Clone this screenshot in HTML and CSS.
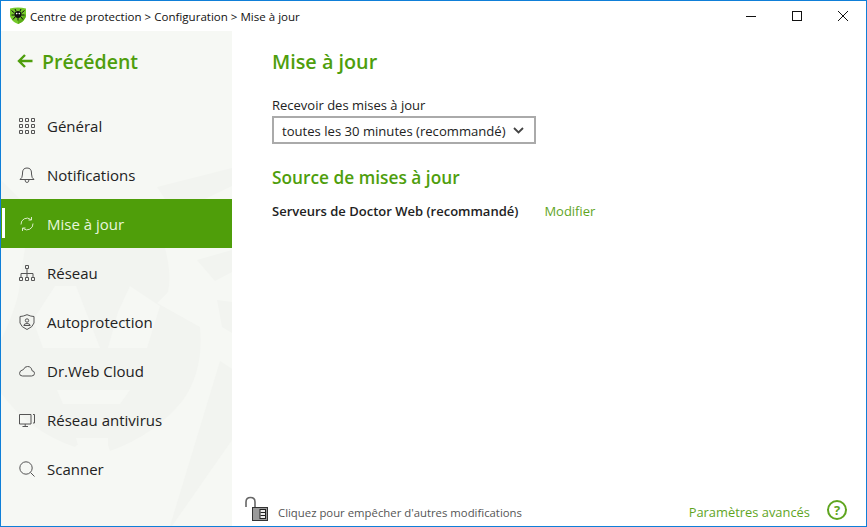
FILE: index.html
```
<!DOCTYPE html>
<html lang="fr">
<head>
<meta charset="utf-8">
<title>Mise à jour</title>
<link rel="stylesheet" href="styles.css">
</head>
<body>
<div class="window">
  <header class="titlebar">
    <svg class="logo" width="18" height="18" viewBox="0 0 18 18">
      <path d="M1 1.5 Q9 -.5 17 1.5 L17 9 Q16 14 9 17 Q2 14 1 9Z" fill="#74c92a"/>
      <path d="M9 17 Q16 14 17 9 L17 7 L9 14Z" fill="#5cae18"/>
      <ellipse cx="9" cy="7.5" rx="3.6" ry="3.4" fill="#111"/>
      <circle cx="7.7" cy="6.6" r=".8" fill="#fff"/><circle cx="10.3" cy="6.6" r=".8" fill="#fff"/>
      <path d="M5.5 6 L2.5 3.5M5.5 8 L2.5 8M6 10 L4 12.5M12.5 6 L15.5 3.5M12.5 8 L15.5 8M12 10 L14 12.5M7 4 L6 2M11 4 L12 2M9 10.5 V13.5" stroke="#111" stroke-width="1" fill="none"/>
    </svg>
    <span class="crumbs">Centre de protection &gt; Configuration &gt; Mise à jour</span>
    <div class="controls">
      <svg class="ctl" width="46" height="30" viewBox="0 0 46 30"><path d="M18 15.5H28" stroke="#111" fill="none"/></svg>
      <svg class="ctl" width="46" height="30" viewBox="0 0 46 30"><rect x="18.5" y="10.5" width="9" height="9" stroke="#111" fill="none"/></svg>
      <svg class="ctl" width="46" height="30" viewBox="0 0 46 30"><path d="M18 10L28 20M28 10L18 20" stroke="#111" fill="none"/></svg>
    </div>
  </header>
  <div class="body">
    <aside class="sidebar">
      <svg class="watermark" width="231" height="495" viewBox="1 31 231 495">
        <g fill="#f2f4f0">
          <path d="M157 187 L232 168 L232 186 L205 199 L165 199Z"/>
          <path d="M1 180 L20 199 H1Z"/>
          <path d="M25 248 H165 Q172 275 168 292 L157 303 L200 327 Q204 370 183 400 Q155 435 110 451 L108 445 H77 L75 447 Q30 432 1 393 V340 Q20 300 20 280Z"/>
          <path d="M197 260 L232 250 V272 L215 281Z"/>
          <path d="M217 300 L232 302 V333 L222 327Z"/>
          <path d="M220 361 L232 369 V440 L172 526 H170Z"/>
        </g>
        <g fill="#f6f8f4">
          <path d="M55 286 L76 286 L100 348 L43 348 L33 320Z"/>
          <path d="M108 348 L147 348 L160 306 L130 286 L118 312Z"/>
          <path d="M57 390 H130 L120 404 H63Z"/>
          <path d="M76 438 H108 V445 H78Z"/>
        </g>
      </svg>
      <a class="back"><svg width="16" height="16" viewBox="0 0 16 16"><path d="M8 2 L2 8 L8 14M2 8H15.5" stroke="#4e9e0c" stroke-width="2.4" fill="none"/></svg><span>Précédent</span></a>
      <nav class="menu">
        <a class="item"><svg width="16" height="16" viewBox="0 0 16 16" fill="none" stroke="#555"><path d="M.5 .5h3v3h-3zM6.5 .5h3v3h-3zM12.5 .5h3v3h-3zM.5 6.5h3v3h-3zM6.5 6.5h3v3h-3zM12.5 6.5h3v3h-3zM.5 12.5h3v3h-3zM6.5 12.5h3v3h-3zM12.5 12.5h3v3h-3z"/></svg><span>Général</span></a>
        <a class="item"><svg width="16" height="16" viewBox="0 0 16 16" fill="none" stroke="#555"><path d="M1 12.5 Q3.5 11 3.5 7 V6 Q3.5 1 8 1 Q12.5 1 12.5 6 V7 Q12.5 11 15 12.5Z M6 12.5 Q6 15.5 8 15.5 Q10 15.5 10 12.5"/></svg><span>Notifications</span></a>
        <a class="item active"><svg width="16" height="16" viewBox="0 0 16 16" fill="none" stroke="#d8ecc8"><path d="M2 8.5 A6 6 0 0 1 11.8 3.5 M14 7.5 A6 6 0 0 1 4.2 12.5 M12.5 1 V4 H9.5 M3.5 15 V12 H6.5"/></svg><span>Mise à jour</span></a>
        <a class="item"><svg width="16" height="16" viewBox="0 0 16 16" fill="none" stroke="#555"><path d="M6.5 .5h3v3h-3zM.5 12.5h3v3h-3zM6.5 12.5h3v3h-3zM12.5 12.5h3v3h-3zM8 3.5V12.5M2 12.5V8.5H14V12.5"/></svg><span>Réseau</span></a>
        <a class="item"><svg width="16" height="16" viewBox="0 0 16 16" fill="none" stroke="#555"><path d="M8 .7 Q12 2.5 15 2.5 V9 Q14 13 8 15.5 Q2 13 1 9 V2.5 Q4 2.5 8 .7Z"/><circle cx="8" cy="6.5" r="1.7"/><path d="M4.8 11.5 Q5 9.5 8 9.5 Q11 9.5 11.2 11.5Z"/></svg><span>Autoprotection</span></a>
        <a class="item"><svg width="16" height="16" viewBox="0 0 16 16" fill="none" stroke="#555"><path d="M3.5 13 H12.5 Q15.5 13 15.5 10.3 Q15.5 8 13 7.7 Q12.5 3.5 8.5 3.5 Q5.5 3.5 4.5 6.5 Q.5 7.5 .5 10.3 Q.5 13 3.5 13Z"/></svg><span>Dr.Web Cloud</span></a>
        <a class="item"><svg width="16" height="16" viewBox="0 0 16 16" fill="none" stroke="#555"><path d="M.5 2.5h11.5v9.5H.5zM6.2 12v2.5M3.5 14.5H9M14 2.5h1.5v8.5H14"/></svg><span>Réseau antivirus</span></a>
        <a class="item"><svg width="16" height="16" viewBox="0 0 16 16" fill="none" stroke="#555"><circle cx="7" cy="7" r="6.2"/><path d="M11.5 11.5L15.5 15.5"/></svg><span>Scanner</span></a>
      </nav>
    </aside>
    <main class="content">
      <h1>Mise à jour</h1>
      <label class="field-label">Recevoir des mises à jour</label>
      <div class="select"><span>toutes les 30 minutes (recommandé)</span><svg width="11" height="7" viewBox="0 0 11 7"><path d="M1 1L5.5 5.5L10 1" stroke="#444" stroke-width="1.8" fill="none"/></svg></div>
      <h2>Source de mises à jour</h2>
      <div class="source"><strong>Serveurs de Doctor Web (recommandé)</strong><a class="link">Modifier</a></div>
      <footer class="footer">
        <svg class="lock" width="24" height="26" viewBox="0 0 24 26"><path d="M2 11V6 Q2 1.5 6.5 1.5 Q11 1.5 11 6 V11" stroke="#666" stroke-width="1.6" fill="none"/><rect x="8.5" y="11.5" width="15" height="13" fill="#9a9a9a" stroke="#333"/><rect x="16" y="13.5" width="5.5" height="9" fill="#eee" stroke="#222"/><path d="M16.5 16.5H21M16.5 19.5H21" stroke="#222"/></svg>
        <span class="hint">Cliquez pour empêcher d'autres modifications</span>
        <a class="adv">Paramètres avancés</a>
        <span class="help">?</span>
      </footer>
    </main>
  </div>
</div>
</body>
</html>
```
FILE: styles.css
```
* { box-sizing: border-box; }
html, body { margin: 0; padding: 0; height: 100%; }
body { font-family: "Open Sans", "Noto Sans", sans-serif; color: #222; background: #fff; overflow: hidden; }
.window { width: 867px; height: 527px; border: 1px solid #0f7fd8; display: flex; flex-direction: column; background: #fff; }
.titlebar { height: 30px; flex: none; display: flex; align-items: center; padding-left: 8px; }
.logo { display: block; }
.crumbs { font-size: 11.55px; margin-left: 3px; color: #111; }
.controls { margin-left: auto; display: flex; margin-right: 0; }
.ctl { display: block; }
.body { flex: 1; display: flex; min-height: 0; }
.sidebar { width: 231px; flex: none; background: #f6f8f4; position: relative; }
.watermark { position: absolute; left: 0; top: 0; }
.back { position: relative; display: flex; align-items: center; height: 30px; margin-top: 15px; padding-left: 16px; color: #4e9e0c; font-size: 19.5px; font-weight: 600; gap: 9px; }
.menu { position: relative; display: flex; flex-direction: column; margin-top: 25px; }
.item { position: relative; height: 49px; display: flex; align-items: center; padding-left: 18px; gap: 12px; font-size: 15px; color: #222; }
.item.active { background: #4f9e0a; color: #e8f6dc; }
.item.active::before { content: ""; position: absolute; left: 1px; top: 9px; width: 3px; height: 30px; background: #fff; }
.content { flex: 1; display: flex; flex-direction: column; padding: 16px 0 0 40px; min-width: 0; }
h1 { margin: 0; font-size: 19.8px; font-weight: 600; color: #4e9e0c; line-height: 30px; }
.field-label { font-size: 13px; line-height: 18px; margin-top: 19px; color: #222; }
.select { width: 264px; height: 28px; border: 2px solid #aaa; display: flex; align-items: center; justify-content: space-between; padding: 1px 10px 0 8px; margin-top: 2px; font-size: 13.1px; }
h2 { margin: 21px 0 0; font-size: 17.3px; font-weight: 600; color: #4e9e0c; line-height: 26px; }
.source { display: flex; gap: 26px; margin-top: 10px; font-size: 13px; line-height: 20px; }
.source strong { font-weight: 600; }
.link { color: #5fa51f; }
.footer { margin-top: auto; height: 32px; display: flex; align-items: center; margin-left: -28px; padding-right: 19px; }
.lock { display: block; margin-right: 10px; margin-top: -3px; }
.hint { font-size: 11.35px; color: #555; margin-top: 4px; }
.adv { margin-left: auto; font-size: 12.9px; color: #5fa51f; margin-top: 4px; }
.help { width: 20px; height: 20px; border: 2px solid #5fa51f; border-radius: 50%; color: #5fa51f; margin-left: 17px; display: flex; align-items: center; justify-content: center; font-size: 13px; font-weight: 700; }
```
